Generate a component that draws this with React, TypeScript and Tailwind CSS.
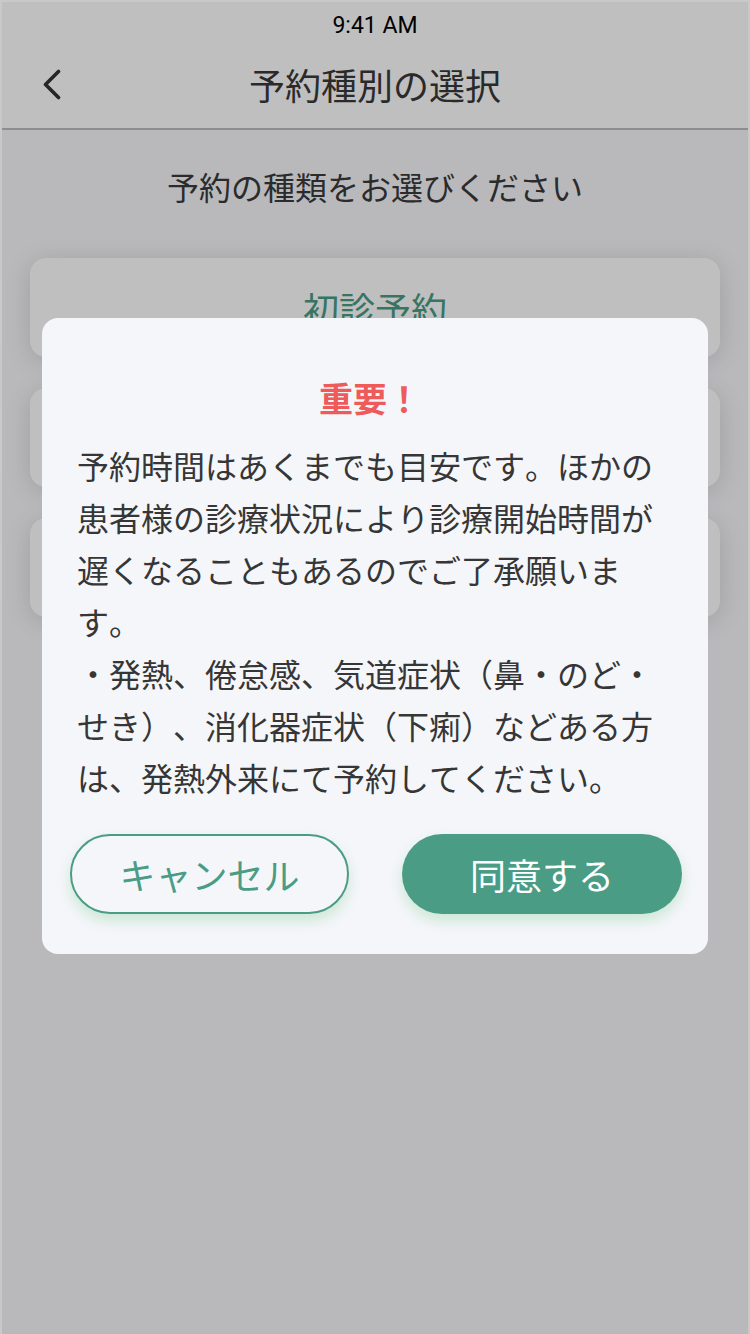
import React from "react";

const JP = { fontFamily: '"Noto Sans CJK JP", "Noto Sans", sans-serif' };

export default function App() {
  return (
    <div
      className="relative w-[750px] h-[1334px] overflow-hidden border-t-2 border-x-2 border-[#c9c9c9] bg-[#f7f7fa] [text-spacing-trim:space-all] [font-kerning:none]"
      style={JP}
    >
      {/* underlying page */}
      <div className="flex flex-col h-full">
        <div className="bg-white border-b-2 border-[#bdbdbd]">
          <div className="h-[46px] flex items-center justify-center">
            <span
              className="text-[23px] text-black leading-none"
              style={{ fontFamily: 'Roboto, "Liberation Sans", sans-serif' }}
            >
              9:41 AM
            </span>
          </div>
          <div className="h-[80px] grid grid-cols-[1fr_auto_1fr] items-center pb-[8px]">
            <div className="pl-[38px] flex items-center">
              <svg width="24" height="32" viewBox="0 0 24 32" fill="none">
                <path
                  d="M18.5 3.5 L5.5 16.5 L18.5 29.5"
                  stroke="#333333"
                  strokeWidth="3.6"
                  strokeLinecap="round"
                  strokeLinejoin="round"
                />
              </svg>
            </div>
            <div className="text-[36px] leading-[44px] text-[#383838]">予約種別の選択</div>
            <div />
          </div>
        </div>
        <div className="pt-[36px] text-center text-[32px] leading-[40px] text-[#3a3a3a]">
          予約の種類をお選びください
        </div>
        <div className="mt-[52px] px-[28px] flex flex-col gap-[31px]">
          <div className="h-[99px] rounded-[16px] bg-white shadow-[0_4px_26px_rgba(0,0,0,0.14)] flex items-center justify-center text-[36px] text-[#4a9c84]">
            初診予約
          </div>
          <div className="h-[99px] rounded-[16px] bg-white shadow-[0_4px_26px_rgba(0,0,0,0.14)]" />
          <div className="h-[99px] rounded-[16px] bg-white shadow-[0_4px_26px_rgba(0,0,0,0.14)]" />
        </div>
      </div>

      {/* dim overlay */}
      <div className="absolute inset-0 bg-black/25" />

      {/* modal */}
      <div className="absolute left-[40px] top-[316px] w-[666px] rounded-[16px] bg-[#f5f6fa] pt-[60px] pb-[40px]">
        <div className="text-center text-[34px] leading-[40px] font-bold text-[#ee5b5b] pr-[10px]">
          重要！
        </div>
        <div className="mt-[21px] pl-[35px] pr-[33px] text-[32px] leading-[52px] text-[#363636]">
          予約時間はあくまでも目安です。ほかの患者様の診療状況により診療開始時間が遅くなることもあるのでご了承願います。
          <br />
          ・発熱、倦怠感、気道症状（鼻・のど・せき）、消化器症状（下痢）などある方は、発熱外来にて予約してください。
        </div>
        <div className="mt-[31px] pl-[28px] pr-[26px] flex gap-[53px]">
          <button className="w-[279px] h-[80px] rounded-full border-2 border-[#4a9c84] bg-[#f5f6fa] text-[#4a9c84] text-[36px] shadow-[0_7px_14px_rgba(110,200,130,0.3)]">
            キャンセル
          </button>
          <button className="w-[280px] h-[80px] rounded-full bg-[#4a9c84] text-white text-[36px] shadow-[0_7px_14px_rgba(110,200,130,0.3)]">
            同意する
          </button>
        </div>
      </div>
    </div>
  );
}
